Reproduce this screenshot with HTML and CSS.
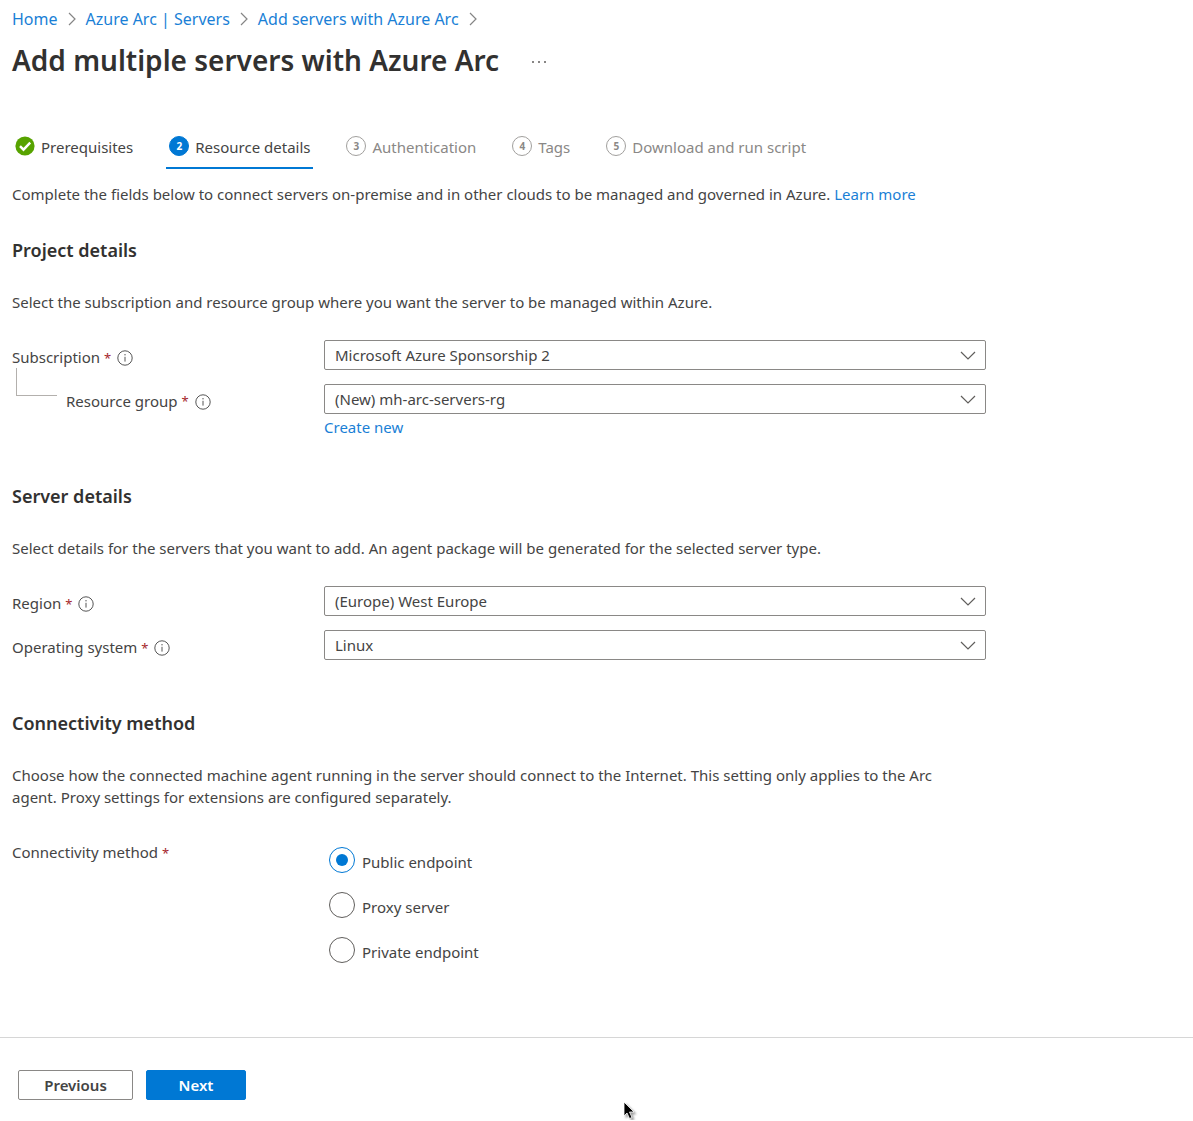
FILE: index.html
```html
<!DOCTYPE html>
<html lang="en">
<head>
<meta charset="utf-8">
<title>Add multiple servers with Azure Arc</title>
<link rel="stylesheet" href="styles.css">
</head>
<body>
<svg class="sprite" aria-hidden="true">
  <symbol id="crumb" viewBox="0 0 8 14"><path d="M1 1l6 6-6 6" fill="none" stroke="#858585" stroke-width="1.2"/></symbol>
  <symbol id="chevron" viewBox="0 0 16 9"><path d="M1 1l7 7 7-7" fill="none" stroke="#605e5c" stroke-width="1.2"/></symbol>
  <symbol id="info" viewBox="0 0 16 16"><circle cx="8" cy="8" r="7.2" fill="none" stroke="#555" stroke-width="1"/><path d="M8 6.800v4.800" stroke="#555" stroke-width="1"/><circle cx="8" cy="4.800" r=".7" fill="#555"/></symbol>
</svg>
<header class="header">
  <nav class="breadcrumb" aria-label="Breadcrumb">
    <a href="#">Home</a><svg class="crumb"><use href="#crumb"/></svg>
    <a href="#">Azure Arc | Servers</a><svg class="crumb"><use href="#crumb"/></svg>
    <a href="#">Add servers with Azure Arc</a><svg class="crumb"><use href="#crumb"/></svg>
  </nav>
  <div class="title-row">
    <h1>Add multiple servers with Azure Arc</h1>
    <button class="more" type="button" aria-label="More">
      <svg width="16" height="4" viewBox="0 0 16 4" fill="#605e5c"><circle cx="2" cy="2" r="1"/><circle cx="8" cy="2" r="1"/><circle cx="14" cy="2" r="1"/></svg>
    </button>
  </div>
</header>
<main class="content">
  <nav class="steps" aria-label="Steps">
    <button class="step" type="button"><svg class="badge" viewBox="0 0 20 20"><circle cx="10" cy="10" r="9.6" fill="#57a300"/><path d="M5 10.2l3.5 3.5 6.700-7" fill="none" stroke="#fff" stroke-width="2.4"/></svg>Prerequisites</button>
    <button class="step current" type="button"><span class="badge number">2</span>Resource details</button>
    <button class="step pending" type="button"><span class="badge number">3</span>Authentication</button>
    <button class="step pending" type="button"><span class="badge number">4</span>Tags</button>
    <button class="step pending" type="button"><span class="badge number">5</span>Download and run script</button>
  </nav>
  <p class="intro">Complete the fields below to connect servers on-premise and in other clouds to be managed and governed in Azure. <a href="#">Learn more</a></p>

  <section class="project">
    <h2>Project details</h2>
    <p>Select the subscription and resource group where you want the server to be managed within Azure.</p>
    <div class="field parent">
      <label for="subscription">Subscription <span class="required">*</span><svg class="info"><use href="#info"/></svg></label>
      <div class="select"><select id="subscription"><option>Microsoft Azure Sponsorship 2</option></select><svg class="chevron"><use href="#chevron"/></svg></div>
    </div>
    <div class="field child">
      <label for="group"><span class="branch"></span>Resource group <span class="required">*</span><svg class="info"><use href="#info"/></svg></label>
      <div class="select"><select id="group"><option>(New) mh-arc-servers-rg</option></select><svg class="chevron"><use href="#chevron"/></svg></div>
      <a class="create" href="#">Create new</a>
    </div>
  </section>

  <section>
    <h2>Server details</h2>
    <p>Select details for the servers that you want to add. An agent package will be generated for the selected server type.</p>
    <div class="field">
      <label for="region">Region <span class="required">*</span><svg class="info"><use href="#info"/></svg></label>
      <div class="select"><select id="region"><option>(Europe) West Europe</option></select><svg class="chevron"><use href="#chevron"/></svg></div>
    </div>
    <div class="field">
      <label for="os">Operating system <span class="required">*</span><svg class="info"><use href="#info"/></svg></label>
      <div class="select"><select id="os"><option>Linux</option></select><svg class="chevron"><use href="#chevron"/></svg></div>
    </div>
  </section>

  <section>
    <h2>Connectivity method</h2>
    <p>Choose how the connected machine agent running in the server should connect to the Internet. This setting only applies to the Arc agent. Proxy settings for extensions are configured separately.</p>
    <div class="field" role="radiogroup" aria-labelledby="method">
      <span id="method" class="group-label">Connectivity method <span class="required">*</span></span>
      <div class="radios">
        <label><input type="radio" name="method" checked><span>Public endpoint</span></label>
        <label><input type="radio" name="method"><span>Proxy server</span></label>
        <label><input type="radio" name="method"><span>Private endpoint</span></label>
      </div>
    </div>
  </section>
</main>
<footer class="footer">
  <button class="button" type="button">Previous</button>
  <button class="button primary" type="button">Next</button>
  <svg class="pointer" viewBox="0 0 14 20"><path d="M1 1v14l3-3 2.500 5.500 2.500-1-2.500-5.500h4.500z" fill="#000" stroke="#fff" stroke-width=".8"/></svg>
</footer>
</body>
</html>
```
FILE: styles.css
```css
* { box-sizing: border-box; }
body {
  margin: 0;
  background: #fff;
  color: #444;
  font: 15px/22px "Segoe UI", "Noto Sans", sans-serif;
}
button, select { font: inherit; color: inherit; }
h1, h2, p { margin: 0; }
a { color: #1a7fd6; text-decoration: none; }
.sprite { display: none; }

.header { padding: 8px 12px 0; }
.breadcrumb { display: flex; align-items: center; gap: 10px; font-size: 16px; }
.crumb { width: 8px; height: 14px; }
.title-row { display: flex; align-items: center; gap: 24px; margin-top: 10px; }
h1 { color: #323130; font-size: 28px; line-height: 40px; font-weight: 600; }
.more { display: flex; padding: 12px 8px 8px; border: 0; background: none; }

.content { max-width: 998px; padding: 0 12px 22px; }
.steps { display: flex; gap: 30px; margin-top: 47px; }
.step {
  display: flex;
  gap: 6px;
  height: 42px;
  padding: 9px 3px 0;
  border: 0;
  border-bottom: 2px solid transparent;
  background: none;
  white-space: nowrap;
}
.badge { width: 20px; height: 20px; flex: none; }
.number {
  border: 1px solid #a19f9d;
  border-radius: 50%;
  font-size: 10px;
  line-height: 18px;
  font-weight: 700;
  text-align: center;
}
.current { border-bottom-color: #0078d4; }
.current .number { border-color: #0078d4; background: #0078d4; color: #fff; }
.pending { color: #8a8886; }
.intro { margin-top: 14px; }

section { margin-bottom: 52px; }
.project { margin-bottom: 47px; }
h2 { margin: 34px 0 30px; color: #323130; font-size: 18px; line-height: 22px; font-weight: 600; }
section p { max-width: 952px; margin-bottom: 27px; }
.field {
  display: grid;
  grid-template-columns: 312px minmax(0, 1fr);
  margin-bottom: 14px;
}
.field > label, .group-label { padding-top: 6px; }
.required { color: #a4262c; font-size: 13px; }
.info { width: 16px; height: 16px; margin-left: 6px; vertical-align: -3px; }
.child > label { display: flex; align-items: flex-start; gap: 4px; }
.child .info { margin: 4px 0 0 2px; }
.select { position: relative; }
.select select {
  display: block;
  width: 100%;
  height: 30px;
  padding: 0 40px 0 10px;
  border: 1px solid #8a8886;
  border-radius: 2px;
  background: #fff;
  appearance: none;
}
.chevron {
  position: absolute;
  top: 11px;
  right: 10px;
  width: 16px;
  height: 9px;
  pointer-events: none;
}
.branch {
  width: 41px;
  height: 28px;
  margin: -22px 5px 0 4px;
  border: solid #b3b0ad;
  border-width: 0 0 1px 1px;
}
.create { grid-column: 2; margin-top: 2px; }

.radios { display: grid; gap: 19px; padding: 12px 0 0 5px; }
.radios label { display: flex; align-items: center; gap: 7px; height: 26px; }
.radios span { padding-top: 4px; }
.radios input {
  appearance: none;
  display: grid;
  place-items: center;
  width: 26px;
  height: 26px;
  margin: 0;
  border: 1px solid #605e5c;
  border-radius: 50%;
}
.radios input:checked { border-color: #0078d4; }
.radios input:checked::before {
  content: "";
  width: 12px;
  height: 12px;
  border-radius: 50%;
  background: #0078d4;
}

.footer {
  position: relative;
  display: flex;
  gap: 13px;
  padding: 32px 18px 20px;
  border-top: 1px solid #d6d6d6;
}
.button {
  width: 115px;
  height: 30px;
  padding: 0;
  border: 1px solid #8a8886;
  border-radius: 2px;
  background: #fff;
  font-weight: 600;
}
.primary { width: 100px; border-color: #0078d4; background: #0078d4; color: #fff; }
.pointer {
  position: absolute;
  left: 623px;
  top: 63px;
  width: 14px;
  height: 20px;
  filter: drop-shadow(2px 2px 1px #0006);
}
```
